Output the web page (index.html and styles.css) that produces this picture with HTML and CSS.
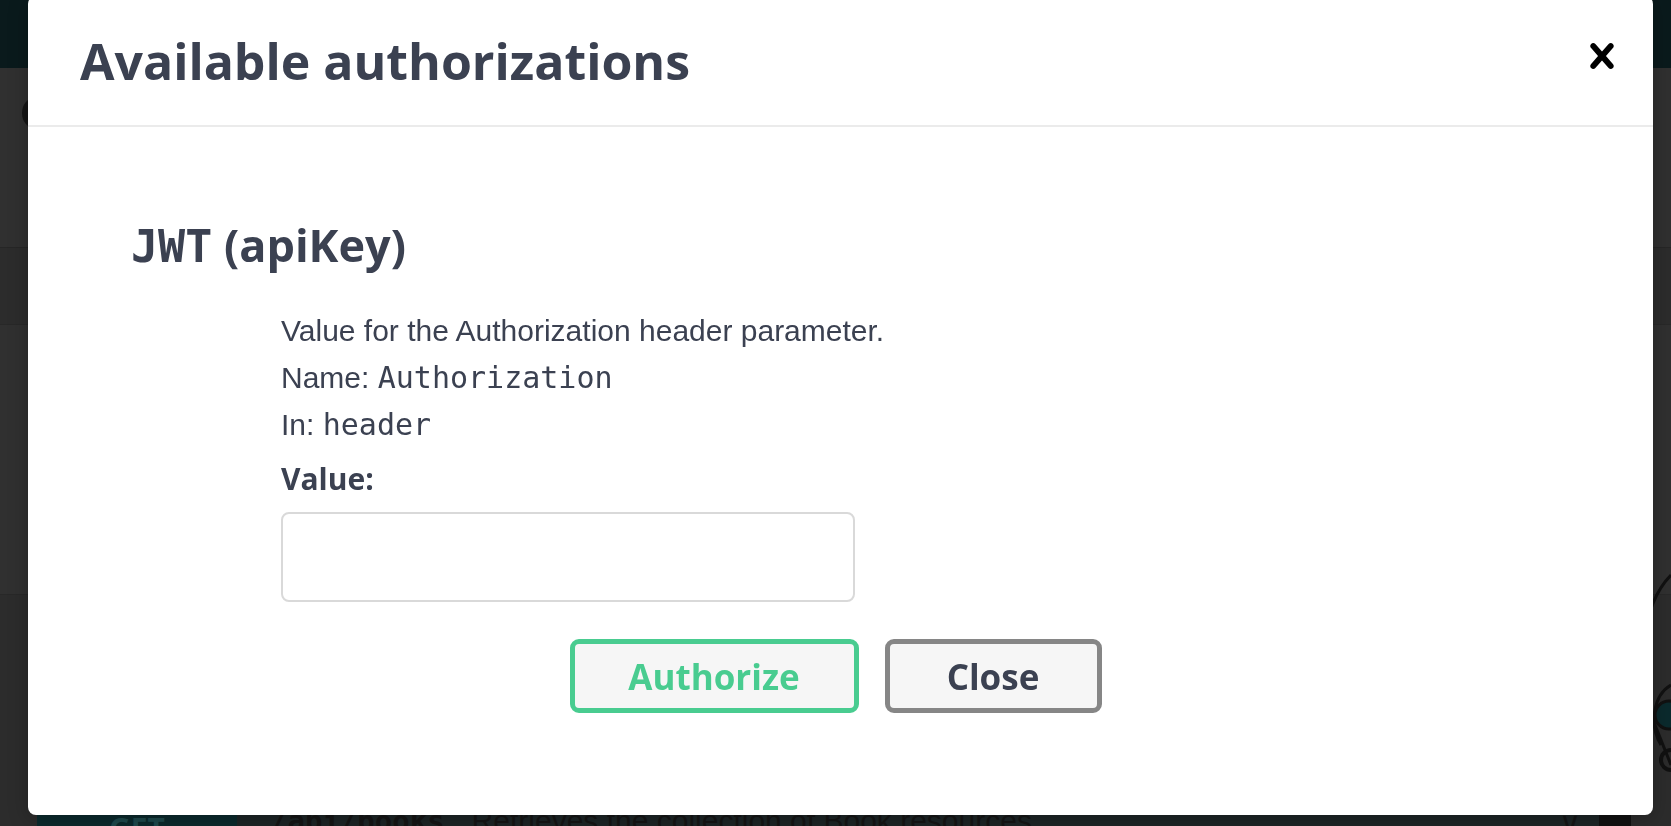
FILE: index.html
```html
<!DOCTYPE html>
<html lang="en">
<head>
<meta charset="utf-8">
<title>Available authorizations</title>
<link rel="stylesheet" href="styles.css">
</head>
<body>
<div class="page">
  <div class="topbar"></div>
  <div class="info">
    <span class="info-dot"></span>
  </div>
  <div class="scheme-bar"></div>
  <div class="servers"></div>
  <div class="tag-section">
    <svg class="deco" width="40" height="240" viewBox="0 0 40 240">
      <path d="M40 10 C 10 40, 4 110, 20 150 C 30 175, 36 190, 40 200" fill="none" stroke="#111" stroke-width="3"/>
      <path d="M40 120 C 22 130, 18 160, 30 180" fill="none" stroke="#111" stroke-width="3"/>
      <circle cx="38" cy="150" r="14" fill="#0b2a2d" stroke="#111" stroke-width="3"/>
      <circle cx="40" cy="195" r="10" fill="none" stroke="#111" stroke-width="4"/>
    </svg>
    <div class="op-row">
      <span class="method">GET</span>
      <span class="path">/api/books</span>
      <span class="summary">Retrieves the collection of Book resources.</span>
      <span class="chev">&#8744;</span>
      <span class="lock"></span>
    </div>
  </div>
</div>

<div class="modal" role="dialog">
  <div class="modal-header">
    <h3 class="modal-title">Available authorizations</h3>
    <button class="close-x" aria-label="Close">
      <svg width="50" height="50" viewBox="0 0 20 20"><path d="M14.348 14.849c-.469.469-1.229.469-1.697 0L10 11.819l-2.651 3.029c-.469.469-1.229.469-1.697 0-.469-.469-.469-1.229 0-1.697l2.758-3.15-2.759-3.152c-.469-.469-.469-1.228 0-1.697.469-.469 1.228-.469 1.697 0L10 8.183l2.651-3.031c.469-.469 1.228-.469 1.697 0 .469.469.469 1.229 0 1.697l-2.758 3.152 2.758 3.15c.469.469.469 1.229 0 1.698z" fill="#000"/></svg>
    </button>
  </div>
  <div class="modal-body">
    <h4 class="scheme-title"><code>JWT</code> (apiKey)</h4>
    <div class="scheme-details">
      <div class="line">Value for the Authorization header parameter.</div>
      <div class="line">Name: <code>Authorization</code></div>
      <div class="line">In: <code>header</code></div>
      <label class="value-label" for="v">Value:</label>
      <input id="v" class="value-input" type="text">
    </div>
    <div class="btn-wrapper">
      <button class="btn btn-authorize">Authorize</button>
      <button class="btn btn-close">Close</button>
    </div>
  </div>
</div>
</body>
</html>
```
FILE: styles.css
```css
html, body {
  margin: 0;
  padding: 0;
  height: 100%;
  overflow: hidden;
  background: #2f2f2f;
  font-family: "Open Sans", "Noto Sans", sans-serif;
}

.page {
  display: flex;
  flex-direction: column;
  height: 100%;
}

.topbar {
  height: 68px;
  background: #0a1a1c;
  flex: none;
}

.info {
  height: 179px;
  background: #303030;
  border-bottom: 1px solid #262626;
  position: relative;
  flex: none;
}

.info-dot {
  position: absolute;
  left: 22px;
  top: 30px;
  width: 24px;
  height: 30px;
  border-radius: 50%;
  background: #151515;
}

.scheme-bar {
  height: 76px;
  background: #2c2c2c;
  flex: none;
}

.servers {
  height: 269px;
  background: #303030;
  border-top: 1px solid #282828;
  border-bottom: 1px solid #282828;
  flex: none;
}

.tag-section {
  flex: 1;
  background: #2c2c2c;
  display: flex;
  flex-direction: column;
  justify-content: flex-end;
  position: relative;
}

.deco {
  position: absolute;
  right: 0;
  top: -30px;
}

.op-row {
  display: flex;
  align-items: center;
  height: 26px;
  margin: 0 40px 0 37px;
  background: #1d2526;
  color: #151515;
  font-size: 30px;
  margin-bottom: -8px;
}

.method {
  width: 200px;
  height: 100%;
  background: #0b2a2d;
  color: #1f4a4d;
  font-weight: 700;
  text-align: center;
}

.path {
  margin-left: 33px;
  font-family: "DejaVu Sans Mono", monospace;
  font-size: 29px;
  font-weight: 700;
}

.summary {
  margin-left: 27px;
  font-family: "Liberation Sans", Arial, sans-serif;
  font-size: 30px;
  flex: 1;
}

.chev {
  width: 40px;
}

.lock {
  width: 32px;
  height: 100%;
  background: #111;
}

/* Modal */
.modal {
  position: fixed;
  left: 28px;
  top: -4px;
  width: 1625px;
  height: 819px;
  background: #fff;
  border-radius: 8px;
  box-shadow: 0 4px 20px rgba(0, 0, 0, 0.25);
  display: flex;
  flex-direction: column;
  color: #3b4151;
}

.modal-header {
  height: 129px;
  flex: none;
  border-bottom: 2px solid #ebebeb;
  display: flex;
  align-items: center;
  justify-content: space-between;
  padding: 0 26px 0 52px;
}

.modal-title {
  margin: 0;
  font-size: 50px;
  line-height: 1;
  font-weight: 700;
  color: #3b4151;
}

.close-x {
  border: 0;
  background: none;
  padding: 0;
  width: 50px;
  height: 50px;
  margin-bottom: 9px;
  cursor: pointer;
}

.close-x svg {
  display: block;
}

.modal-body {
  padding: 0 0 0 103px;
}

.scheme-title {
  margin: 92px 0 0 0;
  font-size: 45px;
  line-height: 52px;
  font-weight: 700;
  color: #3b4151;
}

.scheme-title code {
  font-family: "DejaVu Sans Mono", monospace;
  font-weight: 700;
}

.scheme-details {
  margin: 34px 0 0 150px;
  display: flex;
  flex-direction: column;
  align-items: flex-start;
}

.line {
  font-family: "Liberation Sans", Arial, sans-serif;
  font-size: 30px;
  line-height: 47px;
  color: #3b4151;
}

.line code {
  font-family: "DejaVu Sans Mono", monospace;
  font-size: 30px;
}

.value-label {
  margin-top: 11px;
  font-size: 30px;
  line-height: 40px;
  font-weight: 700;
  color: #3b4151;
}

.value-input {
  margin-top: 13px;
  box-sizing: border-box;
  width: 574px;
  height: 90px;
  border: 2px solid #d9d9d9;
  border-radius: 8px;
  background: #fff;
  padding: 8px 20px;
  font-size: 28px;
  outline: none;
}

.btn-wrapper {
  display: flex;
  justify-content: center;
  gap: 26px;
  margin: 37px 113px 0 0;
}

.btn {
  box-sizing: border-box;
  height: 74px;
  border-radius: 9px;
  background: #f6f6f6;
  font-family: "Open Sans", "Noto Sans", sans-serif;
  font-size: 35px;
  font-weight: 700;
  padding: 0;
  cursor: pointer;
}

.btn-authorize {
  width: 289px;
  border: 5px solid #49cc90;
  color: #49cc90;
}

.btn-close {
  width: 217px;
  border: 5px solid #868686;
  color: #3b4151;
}
```
